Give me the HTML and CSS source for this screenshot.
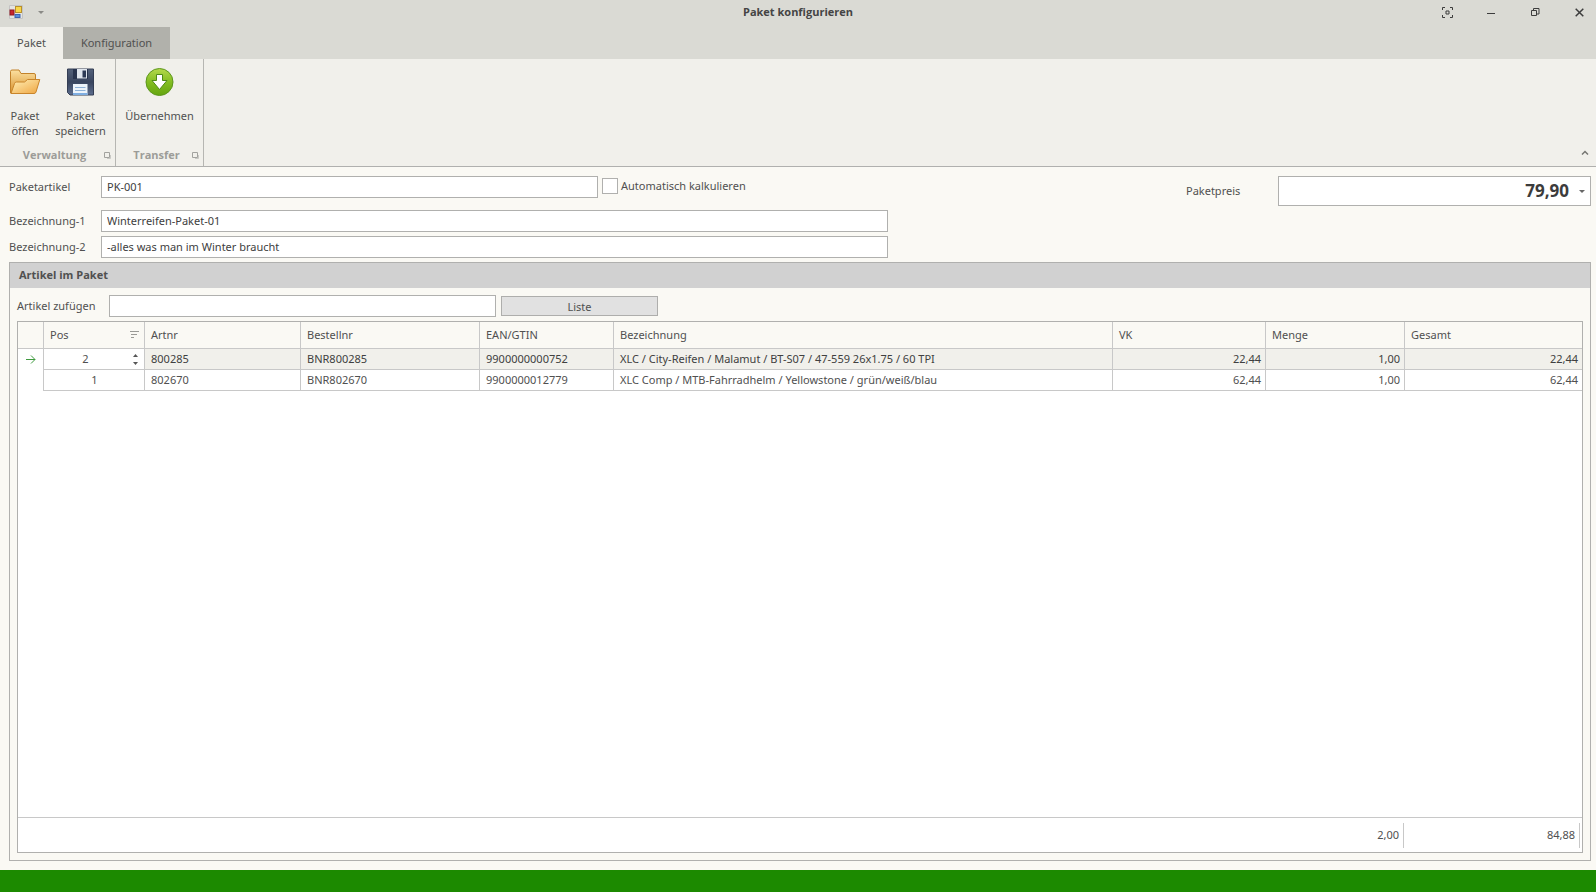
FILE: index.html
```html
<!DOCTYPE html>
<html lang="de">
<head>
<meta charset="utf-8">
<title>Paket konfigurieren</title>
<link rel="stylesheet" href="styles.css">
</head>
<body>
<div class="window">
  <header class="titlebar">
    <div class="quick">
      <svg class="app-icon" width="14" height="14" viewBox="0 0 14 14" aria-hidden="true">
        <path d="M.5.5h13v13H.5z" fill="#e4e4e2" stroke="#c4c4c4"/>
        <rect x="6.5" y="1.5" width="6" height="6" fill="#f8d648" stroke="#b8902a"/>
        <rect x="1" y="5" width="4" height="5" fill="#c8242c" stroke="#8e1a22"/>
        <rect x="6" y="9.500" width="5" height="3" fill="#5a8fdc" stroke="#3b64b0"/>
      </svg>
      <button class="plain quick-menu" aria-label="Schnellzugriff anpassen"><svg width="6" height="3" viewBox="0 0 6 3"><path d="M0 0h6L3 3z" fill="#8a8a86"/></svg></button>
    </div>
    <h1 class="window-title">Paket konfigurieren</h1>
    <div class="window-buttons">
      <button class="plain" aria-label="Vollbild"><svg width="11" height="11" viewBox="0 0 11 11" fill="none" stroke="#3c3c3c"><path d="M.5 3V.5H3M8 .5h2.500V3M10.500 8v2.500H8M3 10.500H.5V8M4 4h3v3H4z"/></svg></button>
      <button class="plain" aria-label="Minimieren"><svg width="8" height="11" viewBox="0 0 8 11"><path d="M0 6h8v1H0z" fill="#3c3c3c"/></svg></button>
      <button class="plain" aria-label="Wiederherstellen"><svg width="9" height="9" viewBox="0 0 9 9" fill="none" stroke="#3c3c3c"><path d="M.5 2.500h5v5h-5zM2.500 2.500v-2h5.500v5.500H5.500"/></svg></button>
      <button class="plain" aria-label="Schließen"><svg width="9" height="9" viewBox="0 0 9 9"><path d="M.7.7l7.600 7.600M8.300.7L.7 8.300" stroke="#3c3c3c" stroke-width="1.500"/></svg></button>
    </div>
  </header>
  <nav class="tabs" role="tablist">
    <button class="tab tab-active" role="tab" aria-selected="true">Paket</button>
    <button class="tab" role="tab" aria-selected="false">Konfiguration</button>
  </nav>
  <div class="ribbon">
    <section class="group group-manage">
      <div class="tools">
        <button class="tool">
          <svg width="32" height="28" viewBox="0 0 32 28" aria-hidden="true">
            <defs><linearGradient id="fb" x1="0" y1="0" x2="0" y2="1"><stop offset="0" stop-color="#fbe0a0"/><stop offset="1" stop-color="#d9922e"/></linearGradient><linearGradient id="ff" x1="0" y1="0" x2="1" y2="1"><stop offset="0" stop-color="#fff0b8"/><stop offset="1" stop-color="#efa540"/></linearGradient></defs>
            <path d="M1.500 25V3.500Q1.500 2 3 2H10l2 3.500h13q1.500 0 1.500 1.500v7L24 25z" fill="url(#fb)" stroke="#c2822a"/>
            <path d="M2 25.500L5.500 15.500q.5-1.500 2-1.500h8l3-2.500h12.300L27 24q-.5 1.500-2 1.500z" fill="url(#ff)" stroke="#c9852b"/>
          </svg>
          <span>Paket<br>öffen</span>
        </button>
        <button class="tool tool-wide">
          <svg width="30" height="28" viewBox="0 0 30 28" aria-hidden="true">
            <defs><linearGradient id="fd" x1="0" y1="0" x2="0" y2="1"><stop offset="0" stop-color="#53617a"/><stop offset=".5" stop-color="#39455f"/><stop offset="1" stop-color="#5d6d8d"/></linearGradient></defs>
            <path d="M2 1h25.500v26H4l-2.500-2.500V1z" fill="url(#fd)" stroke="#343e54"/>
            <path d="M7 1h15v10H7z" fill="#28344e"/><path d="M11 1h10v9.500H11z" fill="#dfe5ed"/><path d="M16.500 2.500h3.500v7h-3.500z" fill="#2c3954"/>
            <path d="M7 16h14.500v11H7z" fill="#edf4fb"/><path d="M9 19.500h10.500M9 22.500h10.500" stroke="#8eb2d8"/><path d="M7 25h14.500v2H7z" fill="#7eaee2"/>
          </svg>
          <span>Paket<br>speichern</span>
        </button>
      </div>
      <div class="caption"><span>Verwaltung</span><button class="plain" aria-label="Verwaltung: Optionen"><svg width="7" height="7" viewBox="0 0 7 7" fill="none" stroke="#a2a29e"><path d="M.5.5h5v5h-5z"/><path d="M6.500 3v3.500H3" stroke="#c8c8c4"/></svg></button></div>
    </section>
    <section class="group group-transfer">
      <div class="tools">
        <button class="tool tool-full">
          <svg width="30" height="30" viewBox="0 0 30 30" aria-hidden="true">
            <defs><linearGradient id="gr" x1="0" y1="0" x2="0" y2="1"><stop offset="0" stop-color="#b5d94c"/><stop offset=".5" stop-color="#83bd22"/><stop offset="1" stop-color="#65a50f"/></linearGradient></defs>
            <circle cx="14.500" cy="15" r="13.500" fill="url(#gr)" stroke="#5c961d"/>
            <path d="M11.500 7.500h6v6h4.500L14.500 22.500 7 13.500h4.500z" fill="#fff" stroke="#4f8a16"/>
          </svg>
          <span>Übernehmen</span>
        </button>
      </div>
      <div class="caption"><span>Transfer</span><button class="plain" aria-label="Transfer: Optionen"><svg width="7" height="7" viewBox="0 0 7 7" fill="none" stroke="#a2a29e"><path d="M.5.5h5v5h-5z"/><path d="M6.500 3v3.500H3" stroke="#c8c8c4"/></svg></button></div>
    </section>
    <button class="plain collapse" aria-label="Menüband einklappen"><svg width="8" height="5" viewBox="0 0 8 5"><path d="M1 4.500l3-3 3 3" fill="none" stroke="#777773" stroke-width="1.500"/></svg></button>
  </div>

  <main class="content">
    <form class="form">
      <div class="fields">
        <div class="field field-article">
          <label for="artikel">Paketartikel</label>
          <input class="box" id="artikel" type="text" value="PK-001">
          <div class="check"><input id="auto" type="checkbox"><label for="auto">Automatisch kalkulieren</label></div>
        </div>
        <div class="field"><label for="bez1">Bezeichnung-1</label><input class="box" id="bez1" type="text" value="Winterreifen-Paket-01"></div>
        <div class="field"><label for="bez2">Bezeichnung-2</label><input class="box" id="bez2" type="text" value="-alles was man im Winter braucht"></div>
      </div>
      <div class="price">
        <label for="preis">Paketpreis</label>
        <div class="price-box"><input id="preis" type="text" value="79,90"><button type="button" class="plain" aria-label="Rechner öffnen"><svg width="6" height="3" viewBox="0 0 6 3"><path d="M0 0h6L3 3z" fill="#666"/></svg></button></div>
      </div>
    </form>

    <section class="panel">
      <h2 class="panel-title">Artikel im Paket</h2>
      <div class="panel-body">
        <div class="adder">
          <label for="add">Artikel zufügen</label>
          <input class="box" id="add" type="text">
          <button class="list-button">Liste</button>
        </div>
        <div class="grid">
          <table class="items">
            <colgroup><col class="c-mark"><col class="c-pos"><col class="c-art"><col class="c-order"><col class="c-ean"><col><col class="c-vk"><col class="c-qty"><col class="c-total"></colgroup>
            <thead>
              <tr><th></th><th><div class="sorted">Pos<svg width="9" height="8" viewBox="0 0 9 8" stroke="#9a9a96"><path d="M0 1.500h9M1 4.500h6M1 7.500h3"/></svg></div></th><th>Artnr</th><th>Bestellnr</th><th>EAN/GTIN</th><th>Bezeichnung</th><th>VK</th><th>Menge</th><th>Gesamt</th></tr>
            </thead>
            <tbody>
              <tr class="current"><td class="mark"><svg width="10" height="9" viewBox="0 0 10 9" fill="none" stroke="#3f9a3f"><path d="M0 4.500h9M5 .5l4 4-4 4"/></svg></td>
                <td class="pos-edit"><div class="spin"><input type="text" value="2" aria-label="Position"><span class="arrows"><button class="plain" aria-label="Erhöhen"><svg width="5" height="3" viewBox="0 0 5 3"><path d="M0 3h5L2.500 0z" fill="#555"/></svg></button><button class="plain" aria-label="Verringern"><svg width="5" height="3" viewBox="0 0 5 3"><path d="M0 0h5L2.500 3z" fill="#555"/></svg></button></span></div></td>
                <td>800285</td><td>BNR800285</td><td>9900000000752</td><td>XLC / City-Reifen / Malamut / BT-S07 / 47-559 26x1.75 / 60 TPI</td><td class="num">22,44</td><td class="num">1,00</td><td class="num">22,44</td></tr>
              <tr><td class="mark"></td><td class="pos">1</td><td>802670</td><td>BNR802670</td><td>9900000012779</td><td>XLC Comp / MTB-Fahrradhelm / Yellowstone / grün/weiß/blau</td><td class="num">62,44</td><td class="num">1,00</td><td class="num">62,44</td></tr>
            </tbody>
          </table>
          <div class="totals"><span class="sum">2,00</span><span class="sum sum-total">84,88</span></div>
        </div>
      </div>
    </section>
  </main>
  <footer class="statusbar"></footer>
</div>
</body>
</html>
```

FILE: styles.css
```css
* { box-sizing: border-box; }
body { margin: 0; background: #faf9f4; }
body, button, input { font-family: "Noto Sans", "Open Sans", sans-serif; font-size: 11px; line-height: 15px; color: #505050; }
button { cursor: pointer; }
svg { display: block; flex: none; }
h1, h2 { margin: 0; font-size: 11px; font-weight: 700; }
.plain { display: flex; align-items: center; justify-content: center; padding: 0; border: 0; background: none; }

.window { display: flex; flex-direction: column; min-height: 100vh; }
.titlebar { display: grid; grid-template-columns: 1fr auto 1fr; align-items: center; height: 27px; padding-bottom: 3px; background: #dadad4; }
.quick { display: flex; align-items: center; gap: 14px; padding-left: 9px; }
.quick-menu { width: 8px; height: 16px; }
.window-title { padding-bottom: 2px; color: #444; font-family: "Open Sans", "Noto Sans", sans-serif; }
.window-buttons { display: flex; justify-content: flex-end; }
.window-buttons button { width: 44px; height: 24px; }
.window-buttons button:last-child { width: 34px; margin-left: 5px; }

.tabs { display: flex; height: 32px; background: #dadad4; }
.tab { width: 107px; padding: 0 0 2px; border: 0; background: #b1b1ab; }
.tab-active { width: 63px; background: #f1f0eb; }

.ribbon { display: flex; height: 108px; background: #f1f0eb; border-bottom: 1px solid #b0b0ae; }
.group { display: flex; flex-direction: column; justify-content: space-between; border-right: 1px solid #b6b6b2; }
.group-manage { width: 116px; }
.group-transfer { width: 88px; }
.tools { display: flex; }
.tool { display: flex; flex-direction: column; align-items: center; width: 50px; padding: 8px 0 0; border: 0; background: none; }
.tool svg { height: 30px; margin-bottom: 11px; }
.tool-wide { width: 61px; }
.tool-full { width: 100%; }
.caption { display: flex; align-items: center; height: 23px; padding: 0 4px 0 5px; color: #9c9c98; font-weight: 700; font-family: "Open Sans", "Noto Sans", sans-serif; }
.caption span { flex: 1; text-align: center; }
.caption button { padding-top: 2px; }
.collapse { width: 22px; height: 22px; margin: auto 0 3px auto; }

.content { display: flex; flex: 1; flex-direction: column; padding: 9px 5px 9px 9px; }
.form { display: flex; justify-content: space-between; align-items: flex-start; margin-bottom: 4px; }
.fields { display: flex; flex-direction: column; gap: 4px; width: 879px; max-width: 60%; }
.field { display: grid; grid-template-columns: 92px 1fr; align-items: center; }
.field-article { grid-template-columns: 92px 1fr 290px; margin-bottom: 8px; }
.field label, .price label, .adder label { padding-bottom: 2px; }
.box { width: 100%; min-width: 0; height: 22px; padding: 0 5px 2px; border: 1px solid #b0b0ae; background: #fff; color: #404040; }
.check { display: flex; align-items: center; gap: 3px; padding: 0 0 2px 4px; }
.check input { appearance: none; width: 16px; height: 16px; margin: 0; border: 1px solid #b0b0ae; background: #fff; }
.check input:checked { background: #1c8a00; }
.price { display: flex; align-items: center; width: 405px; }
.price label { width: 92px; }
.price-box { display: flex; flex: 1; height: 30px; border: 1px solid #b0b0ae; background: #fff; }
.price-box input { flex: 1; min-width: 0; padding: 0; border: 0; background: none; text-align: right; font-family: "Open Sans", "Noto Sans", sans-serif; font-size: 17px; font-weight: 700; line-height: 24px; color: #3c3c3c; }
.price-box button { width: 21px; padding-left: 4px; }

.panel { display: flex; flex: 1; flex-direction: column; border: 1px solid #b0b0ae; }
.panel-title { padding: 4px 9px 6px; background: #d1d1d1; font-family: "Open Sans", "Noto Sans", sans-serif; }
.panel-body { display: flex; flex: 1; flex-direction: column; gap: 4px; padding: 7px; }
.adder { display: grid; grid-template-columns: 92px 387px 162px; align-items: center; }
.list-button { height: 20px; margin-left: 5px; padding: 0; border: 1px solid #aeaeac; background: #e1e1e1; }
.grid { display: flex; flex: 1; flex-direction: column; border: 1px solid #b0b0ae; background: #fff; }
.items { width: 100%; table-layout: fixed; border-collapse: separate; border-spacing: 0; }
.c-mark { width: 26px; }
.c-pos { width: 101px; }
.c-art { width: 156px; }
.c-order { width: 179px; }
.c-ean { width: 134px; }
.c-vk { width: 153px; }
.c-qty { width: 139px; }
.c-total { width: 177px; }
.items th, .items td { height: 21px; padding: 0 5px 2px 6px; border-right: 1px solid #c8c8c8; border-bottom: 1px solid #c8c8c8; text-align: left; font-weight: 400; white-space: nowrap; overflow: hidden; }
.items th { height: 27px; background: #faf9f4; }
.items th:last-child, .items td:last-child { border-right: 0; }
.items .current td { background: #f1f0eb; color: #404040; }
.items td.mark { padding: 0 0 0 8px; border-bottom: 0; }
.items .current .mark, .items .current .pos-edit { background: #fff; }
.items td.num { padding-right: 4px; text-align: right; }
.items td.pos { text-align: center; }
.items td.pos-edit { padding: 0; }
.sorted { display: flex; align-items: center; justify-content: space-between; }
.spin { display: flex; height: 20px; }
.spin input { flex: 1; min-width: 0; padding: 0 0 2px; border: 0; background: none; text-align: center; }
.arrows { display: flex; flex-direction: column; justify-content: center; width: 17px; }
.arrows button { height: 8px; }
.totals { display: flex; justify-content: flex-end; margin-top: auto; padding: 5px 2px 4px; border-top: 1px solid #c8c8c8; }
.sum { width: 139px; padding: 4px 4px 6px; border-right: 1px solid #c8c8c8; text-align: right; }
.sum-total { width: 176px; }
.statusbar { height: 22px; background: #1c8a00; }
```
